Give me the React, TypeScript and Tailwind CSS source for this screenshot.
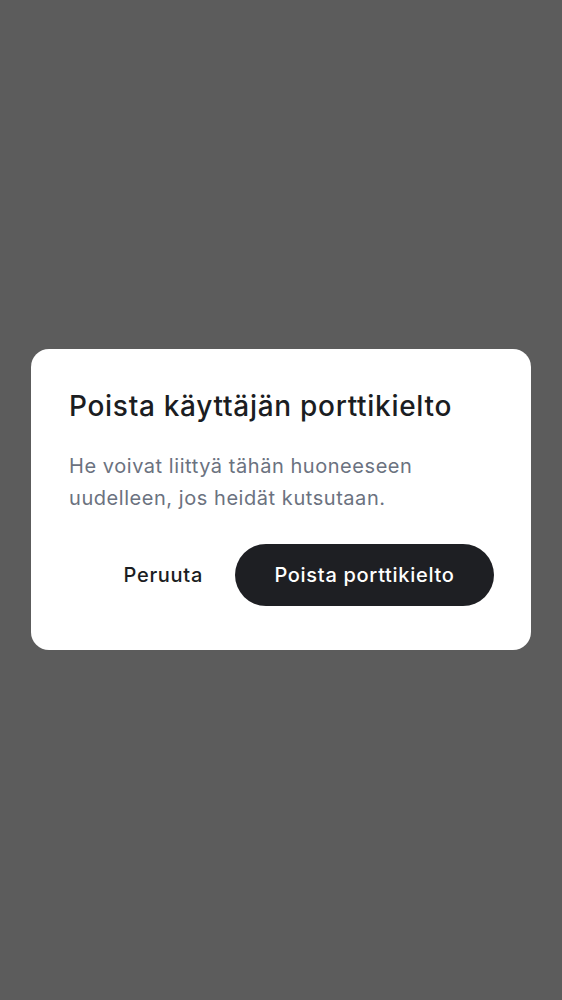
import { FC } from "react";

const App: FC = () => {
  return (
    <div
      className="w-[562px] h-[1000px] bg-[#5c5c5c] flex items-center justify-center"
      style={{ fontFamily: "Inter, 'Noto Sans', sans-serif" }}
    >
      <div className="w-[500px] bg-white rounded-[18px] px-[38px] pt-[37px] pb-[44px] mt-[-1px]">
        <h2 className="text-[28px] leading-[40px] font-medium text-[#1b1d22] tracking-[0.7px]">
          Poista käyttäjän porttikielto
        </h2>
        <p className="mt-[24px] text-[20px] leading-[32px] text-[#6b7280] tracking-[0.55px]">
          He voivat liittyä tähän huoneeseen uudelleen, jos heidät kutsutaan.
        </p>
        <div className="mt-[30px] flex items-center justify-end">
          <button className="h-[62px] px-[32px] text-[20px] font-medium text-[#1b1d22] tracking-[0.7px]">
            Peruuta
          </button>
          <button className="h-[62px] w-[259px] rounded-full bg-[#1e1f23] text-white text-[20px] font-medium tracking-[0.7px] mr-[-1px]">
            Poista porttikielto
          </button>
        </div>
      </div>
    </div>
  );
};

export default App;
